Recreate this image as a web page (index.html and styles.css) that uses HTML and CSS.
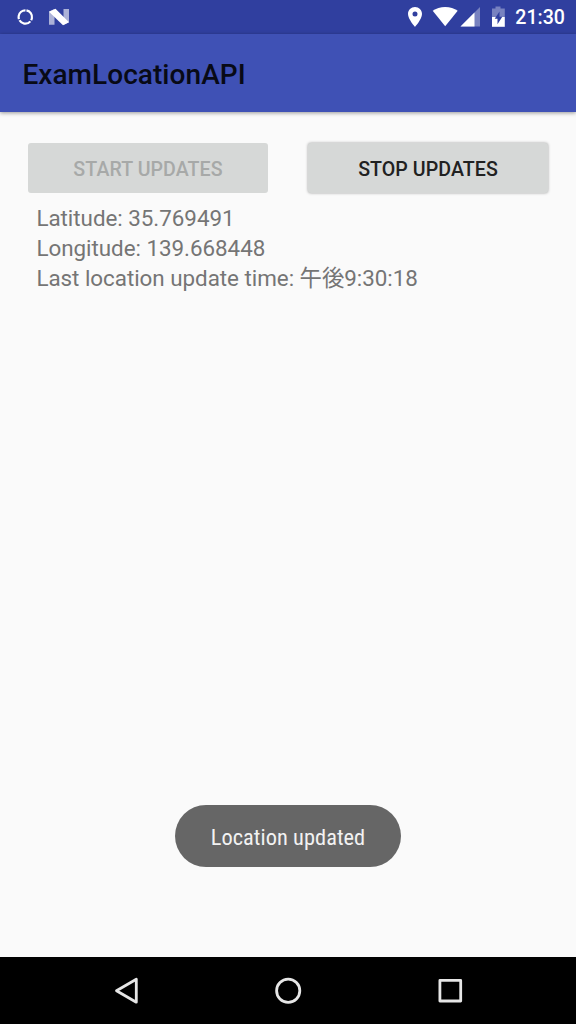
FILE: index.html
```html
<!DOCTYPE html>
<html lang="ja">
<head>
<meta charset="utf-8">
<title>ExamLocationAPI</title>
<link rel="stylesheet" href="styles.css">
</head>
<body>
<div class="screen">
  <header class="status-bar">
    <svg class="status-icons" width="80" height="34" viewBox="0 0 80 34">
      <circle cx="25.3" cy="17" r="6.700" fill="none" stroke="#fff" stroke-width="2.200" stroke-dasharray="12.730 1.300" transform="rotate(-80 25.3 17)"/>
      <path d="M49 11.500 54.500 9V24.800H49ZM63.500 9H69V22.300L63.500 25Z" fill="#fff" opacity=".6"/>
      <path d="M49 11.700 55.500 8.700 69 22.300 63 25.300Z" fill="#fff"/>
    </svg>
    <div class="status-right">
      <svg width="106" height="34" viewBox="404 0 106 34" fill="#fff">
        <path fill-rule="evenodd" d="M415 7c-3.900 0-7 3.100-7 7 0 5.200 7 12.900 7 12.900s7-7.700 7-12.900c0-3.900-3.100-7-7-7Zm0 4.500a2.500 2.500 0 1 1 0 5 2.500 2.500 0 0 1 0-5Z"/>
        <path d="M445.200 26.200 432.700 10.700C436 8.200 440.500 6.900 445.200 6.900S454.400 8.200 457.700 10.700Z"/>
        <path d="M480 7v19.500h-19.500Z" opacity=".35"/>
        <path d="M474.500 12.500v14h-14Z"/>
        <path opacity=".35" d="M492 8.500h3.500V6.500h5v2h4.300V17H492Z"/>
        <path d="M492 17h12.800v9.800H492Z"/>
        <path fill="#303f9f" d="M499.500 11.500v5.200h2.800l-4.800 7.600v-5.600h-2.800Z"/>
      </svg>
      <span class="clock">21:30</span>
    </div>
  </header>
  <div class="app-bar"><h1 class="title">ExamLocationAPI</h1></div>
  <main class="content">
    <div class="buttons">
      <button class="button button-disabled" disabled>START UPDATES</button>
      <button class="button button-raised">STOP UPDATES</button>
    </div>
    <div class="readings">
      <div><span class="reading">Latitude: 35.769491</span></div>
      <div><span class="reading">Longitude: 139.668448</span></div>
      <div><span class="reading">Last location update time: 午後9:30:18</span></div>
    </div>
    <div class="toast"><span class="toast-text">Location updated</span></div>
  </main>
  <nav class="nav-bar">
    <svg width="576" height="67" viewBox="0 957 576 67" fill="none" stroke="#e6e6e6" stroke-width="2.800" stroke-linejoin="round">
      <path d="M136.300 979.200v23L116.500 990.700Z"/>
      <circle cx="288.200" cy="990.700" r="11.600"/>
      <rect x="439.900" y="980.400" width="20.800" height="20.600"/>
    </svg>
  </nav>
</div>
</body>
</html>
```
FILE: styles.css
```css
* { box-sizing: border-box; }
body { margin: 0; font-family: Roboto, "Noto Sans CJK JP", sans-serif; }
.screen { width: 576px; height: 1024px; display: flex; flex-direction: column; overflow: hidden; background: #fafafa; }
.status-bar { height: 34px; flex: none; display: flex; justify-content: space-between; background: #303f9f; color: #fff; }
.status-right { display: flex; padding-right: 11px; }
.status-right svg { margin-right: 5px; }
.clock { font-size: 19.6px; font-weight: 500; line-height: 36px; }
.app-bar { height: 78px; flex: none; padding-left: 22.4px; display: flex; align-items: center; background: #3f51b5; box-shadow: 0 1px 4px rgba(0,0,0,.4); position: relative; }
.title { margin: 0; font-size: 28px; line-height: 34px; font-weight: 500; color: #080a16; padding-top: 4px; letter-spacing: .06px; }
.content { flex: 1; display: flex; flex-direction: column; padding: 30px 28px 0; }
.buttons { display: flex; justify-content: space-between; align-items: center; height: 52px; }
.button { width: 240px; height: 50px; border: 0; border-radius: 3px; padding: 4px 0 0; font: 500 19.6px/24px Roboto, sans-serif; background: #d6d8d7; letter-spacing: .06px; }
.button-disabled { color: #a7a9a8; }
.button-raised { color: #212121; box-shadow: 0 0 3px rgba(0,0,0,.38); }
.readings { padding: 8.500px 0 0 8.400px; color: #757575; font-size: 22.4px; line-height: 30.400px; letter-spacing: -.03px; white-space: nowrap; }
.readings div { height: 30.400px; }
.toast { align-self: center; display: flex; align-items: center; justify-content: center; width: 226px; height: 62px; border-radius: 31px; background: #666; color: #f2f2f2; margin-top: auto; margin-bottom: 90px; }
.toast-text { font-family: "Roboto Condensed", Roboto, sans-serif; font-stretch: 75%; font-size: 22.4px; white-space: nowrap; padding-top: 2px; letter-spacing: .04px; }
.nav-bar { height: 67px; flex: none; background: #000; }
.nav-bar svg { display: block; }
```
